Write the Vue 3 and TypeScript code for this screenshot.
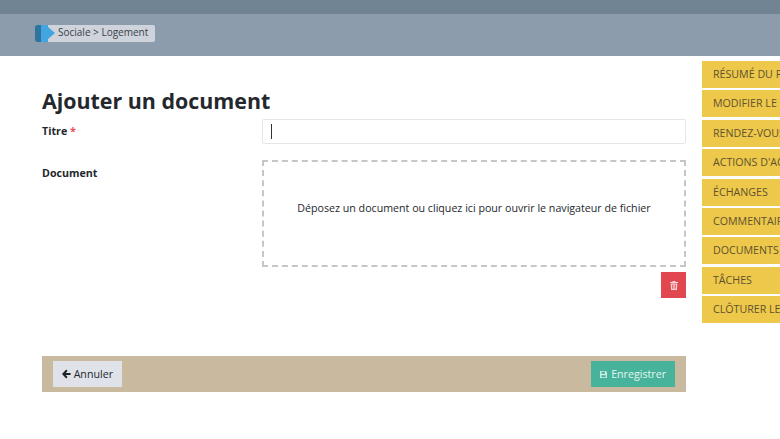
<script setup lang="ts">
const actions = [
  "RÉSUMÉ DU PARCOURS",
  "MODIFIER LE PARCOURS",
  "RENDEZ-VOUS",
  "ACTIONS D'ACCOMPAGNEMENT",
  "ÉCHANGES",
  "COMMENTAIRES",
  "DOCUMENTS",
  "TÂCHES",
  "CLÔTURER LE PARCOURS",
];
</script>

<template>
  <div class="page">
    <div class="topbar"></div>
    <header class="header">
      <div class="crumb">
        <span class="crumb-mark"></span>
        <span class="crumb-text">Sociale &gt; Logement</span>
      </div>
    </header>
    <div class="body">
      <main class="content">
        <h1 class="title">Ajouter un document</h1>
        <div class="row">
          <label class="label">Titre <span class="req">*</span></label>
          <div class="input"><span class="caret"></span></div>
        </div>
        <div class="row doc-row">
          <label class="label doc-label">Document</label>
          <div class="field">
            <div class="dropzone">Déposez un document ou cliquez ici pour ouvrir le navigateur de fichier</div>
            <button class="btn-delete" type="button" aria-label="Supprimer">
              <svg width="8" height="9" viewBox="0 0 8 9">
                <path fill="#f6d5d7" d="M2.8 0h2.4l.5.9H8v1H0v-1h2.3zM.7 2.4h6.6L6.9 9H1.1z" />
                <path fill="#e2474f" d="M2.3 3.4h.7v4.4h-.7zM3.65 3.4h.7v4.4h-.7zM5 3.4h.7v4.4H5z" />
              </svg>
            </button>
          </div>
        </div>
        <div class="footer">
          <button class="btn btn-cancel" type="button">
            <svg width="9" height="10" viewBox="0 0 9 10">
              <path fill="#1f2328" d="M4.4.4l1.4 1.4-2 2.1H9v2.2H3.8l2 2.1-1.4 1.4L0 5z" />
            </svg>
            Annuler
          </button>
          <button class="btn btn-save" type="button">
            <svg width="9" height="9" viewBox="0 0 10 10">
              <path fill="#cdeae3" fill-rule="evenodd" d="M0 0h8l2 2v8H0zM2 1v3h5V1zM2 6v3h6V6z" />
            </svg>
            Enregistrer
          </button>
        </div>
      </main>
      <nav class="actions">
        <a v-for="a in actions" :key="a" class="action">{{ a }}</a>
      </nav>
    </div>
  </div>
</template>

<style scoped>
.page {
  width: 780px;
  height: 439px;
  overflow: hidden;
  background: #fff;
  font-family: "Open Sans", sans-serif;
  font-size: 10.67px;
  color: #24282d;
}
.topbar {
  height: 14px;
  background: #718493;
}
.header {
  height: 42px;
  background: #8d9cad;
  padding: 11px 0 0 35px;
  box-sizing: border-box;
}
.crumb {
  display: inline-flex;
  align-items: center;
  height: 17px;
  background: #ced3dc;
  border-radius: 2px;
  padding-right: 7px;
}
.crumb-mark {
  position: relative;
  width: 13px;
  height: 17px;
  margin-right: 10px;
  border-radius: 2px 0 0 2px;
  background: linear-gradient(90deg, #2f749f 0 6px, #42a5e0 6px);
}
.crumb-mark::after {
  content: "";
  position: absolute;
  left: 13px;
  top: 2px;
  border-left: 7px solid #42a5e0;
  border-top: 6.5px solid transparent;
  border-bottom: 6.5px solid transparent;
}
.crumb-text {
  color: #3a3f47;
  font-size: 10px;
  line-height: 15px;
  padding-bottom: 2px;
}
.body {
  display: flex;
  justify-content: space-between;
}
.content {
  width: 644px;
  margin-left: 42px;
  padding-top: 31px;
}
.title {
  margin: 0;
  font-size: 21.4px;
  line-height: 28px;
  font-weight: 700;
  color: #24282d;
}
.row {
  display: flex;
  margin-top: 4px;
}
.label {
  width: 220px;
  font-weight: 700;
  line-height: 18px;
  padding-top: 3px;
  box-sizing: border-box;
}
.req {
  color: #e8505b;
}
.input {
  width: 424px;
  height: 25px;
  box-sizing: border-box;
  border: 1px solid #e4e6e8;
  border-radius: 2px;
  padding: 4px 8px;
}
.caret {
  display: block;
  width: 1px;
  height: 15px;
  background: #333;
}
.doc-row {
  margin-top: 16px;
}
.doc-label {
  padding-top: 4px;
}
.field {
  width: 424px;
  display: flex;
  flex-direction: column;
  align-items: flex-end;
}
.dropzone {
  width: 100%;
  height: 107px;
  box-sizing: border-box;
  border: 2px dashed #c4c6c9;
  padding-bottom: 12px;
  display: flex;
  align-items: center;
  justify-content: center;
  color: #24282d;
}
.btn-delete {
  width: 25px;
  height: 26px;
  margin-top: 5px;
  border: 0;
  padding: 0;
  background: #e2474f;
  display: flex;
  align-items: center;
  justify-content: center;
}
.footer {
  display: flex;
  justify-content: space-between;
  align-items: center;
  height: 36px;
  margin-top: 58px;
  padding: 0 11px;
  background: #c9b99e;
}
.btn {
  display: inline-flex;
  align-items: center;
  gap: 3px;
  height: 26px;
  border: 0;
  padding: 0 9px;
  font: inherit;
}
.btn-cancel {
  width: 69px;
  background: #dfe2e8;
  color: #24282d;
}
.btn-save {
  gap: 4px;
  width: 84px;
  background: #47b39b;
  color: #e4f5f0;
}
.actions {
  width: 78px;
  margin-top: 5px;
  display: flex;
  flex-direction: column;
  gap: 2.4px;
}
.action {
  display: block;
  height: 27px;
  line-height: 26px;
  padding-left: 11px;
  background: #edc84a;
  color: #5f5130;
  white-space: nowrap;
  overflow: hidden;
}
</style>

<style>
html,
body {
  margin: 0;
  background: #fff;
}
</style>
